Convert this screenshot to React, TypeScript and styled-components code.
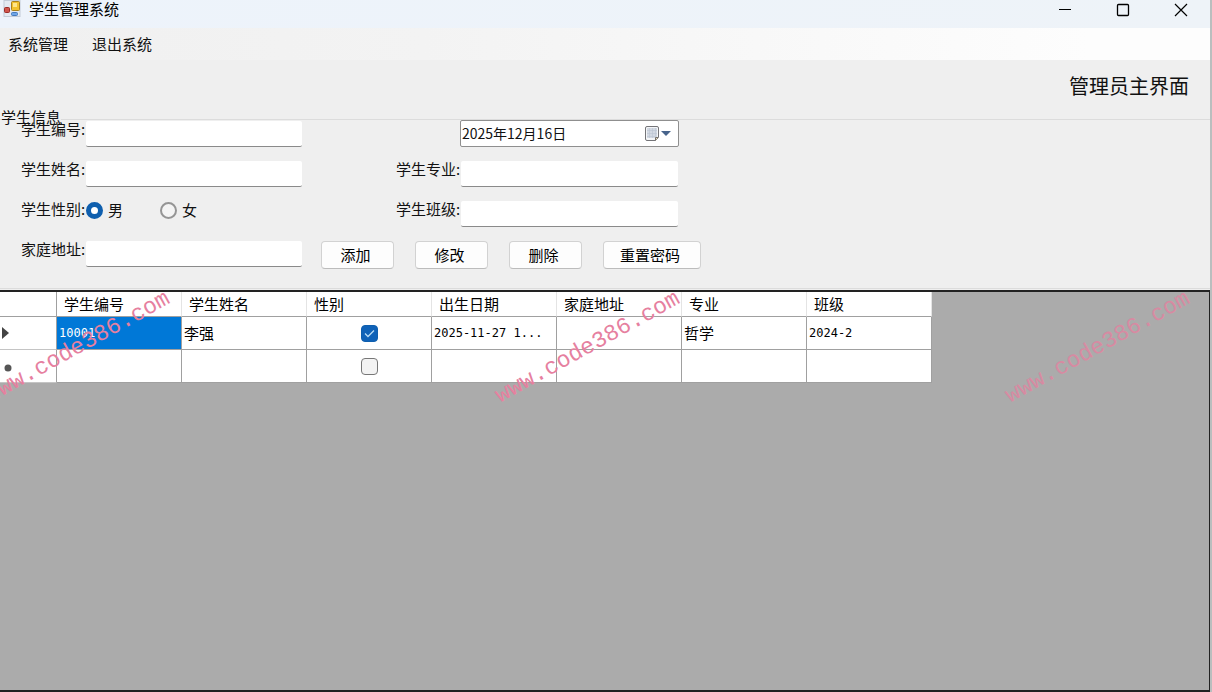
import React from "react";
import styled, { createGlobalStyle } from "styled-components";

const GlobalStyle = createGlobalStyle`
  * { box-sizing: border-box; }
  body {
    margin: 0;
    background: #efefef;
    color: #111;
    font-family: "Noto Sans CJK SC", sans-serif;
    font-size: 15px;
    line-height: 20px;
  }
  button, input { font: inherit; color: inherit; }
`;

const Window = styled.div`
  position: relative;
  display: flex;
  flex-direction: column;
  min-height: 100vh;
  overflow: hidden;
  border-right: 2px solid #b9bebe;
`;

const TitleBar = styled.header`
  display: flex;
  align-items: flex-start;
  justify-content: space-between;
  height: 28px;
  padding: 0 12px 0 3px;
  background: linear-gradient(90deg, #edf3fb, #eef3f8);
`;

const AppTitle = styled.h1`
  display: flex;
  align-items: center;
  gap: 8px;
  margin: 0;
  color: #000;
  font-size: 15px;
  font-weight: 400;
  line-height: 16px;
`;

const WindowControls = styled.div`
  display: flex;
  gap: 24px;
`;

const WindowButton = styled.button`
  display: grid;
  place-items: center;
  width: 34px;
  height: 20px;
  padding: 0;
  border: 0;
  background: transparent;
`;

const MenuBar = styled.nav`
  display: flex;
  align-items: center;
  gap: 24px;
  height: 32px;
  padding: 0 8px;
  background: linear-gradient(90deg, #f0f0f0, #f3f3f3 35%, #fdfdfd 90%);
`;

const MenuItem = styled.button`
  padding: 0;
  border: 0;
  background: transparent;
`;

const Banner = styled.div`
  display: flex;
  justify-content: flex-end;
  align-items: center;
  height: 56px;
  padding: 0 21px 4px;
`;

const BannerTitle = styled.h2`
  margin: 0;
  font-size: 20px;
  font-weight: 400;
`;

const StudentInfo = styled.fieldset`
  min-width: 0;
  margin: 0;
  padding: 0 0 21px 21px;
  border: 0 solid #dcdcdc;
  border-width: 1px 0;
`;

const Legend = styled.legend`
  margin-left: -20px;
  padding: 0 0 6px;
  line-height: 1px;
`;

const FormRows = styled.div`
  display: flex;
  flex-direction: column;
  gap: 14px;
  margin-top: -2px;
`;

const FormRow = styled.div`
  display: flex;
  height: 27px;
  margin-bottom: -1px;
`;

const Field = styled.div`
  display: flex;
  width: 281px;
`;

const SecondField = styled(Field)`
  width: 282px;
  margin-left: 94px;
`;

const FieldLabel = styled.label`
  flex: 0 0 65px;
  line-height: 16px;
  white-space: nowrap;
`;

const TextBox = styled.input`
  flex: 1;
  min-width: 0;
  height: 26px;
  padding: 0 3px;
  border: 0;
  border-bottom: 1px solid #8a8a8a;
  border-radius: 2px;
  background: #fff;
  outline: 0;
`;

const DateBox = styled.div`
  display: flex;
  align-items: center;
  width: 219px;
  height: 27px;
  margin: -1px 0 0 158px;
  border: 1px solid #8f8f8f;
  border-radius: 2px;
  background: #fff;
`;

const DateInput = styled.input`
  flex: 1;
  min-width: 0;
  height: 24px;
  padding: 0 1px 2px;
  border: 0;
  background: transparent;
  font-size: 14px;
  outline: 0;
`;

const DateToggle = styled.button`
  display: flex;
  align-items: center;
  padding: 0 6px 0 0;
  border: 0;
  background: transparent;
`;

const RadioGroup = styled.div`
  display: flex;
  align-items: flex-start;
  gap: 37px;
`;

const RadioLabel = styled.label`
  display: flex;
  align-items: center;
  gap: 5px;
  line-height: 18px;
`;

const Radio = styled.input`
  appearance: none;
  width: 17px;
  height: 17px;
  margin: 0;
  border: 2px solid #959595;
  border-radius: 50%;
  background: #f4f4f4;
  &:checked {
    border: 5px solid #0f5fae;
    background: #fff;
  }
`;

const ButtonRow = styled.div`
  display: flex;
  gap: 21px;
  margin-left: 19px;
`;

const ActionButton = styled.button<{ $wide?: boolean }>`
  width: ${(p) => (p.$wide ? 98 : 73)}px;
  height: 28px;
  padding: 0 4px 0 0;
  border: 1px solid #d2d2d2;
  border-bottom-color: #bcbcbc;
  border-radius: 4px;
  background: #fdfdfd;
  color: #000;
`;

const GridPanel = styled.main`
  flex: 1;
  margin-top: 1px;
  border: solid #222;
  border-width: 2px 1px 2px 0;
  background: #ababab;
`;

const Table = styled.table`
  width: 932px;
  table-layout: fixed;
  border-collapse: separate;
  border-spacing: 0;
  background: #fff;
  color: #000;
`;

const HeadCell = styled.th<{ $corner?: boolean }>`
  height: 25px;
  padding: 0 7px;
  border-right: 1px solid ${(p) => (p.$corner ? "#a0a0a0" : "#e4e4e4")};
  border-bottom: 1px solid #a0a0a0;
  font-weight: 400;
  text-align: left;
`;

const RowMarker = styled.th`
  height: 33px;
  padding: 0 0 0 2px;
  border-right: 1px solid #a0a0a0;
  border-bottom: 1px solid #c4c4c4;
  text-align: left;
`;

const Cell = styled.td<{ $selected?: boolean; $latin?: boolean }>`
  height: 33px;
  padding: 0 2px;
  border-right: 1px solid #a0a0a0;
  border-bottom: 1px solid #a0a0a0;
  background: ${(p) => (p.$selected ? "#0078d7" : "#fff")};
  color: ${(p) => (p.$selected ? "#fff" : "#000")};
  font-family: ${(p) => (p.$latin ? '"DejaVu Sans Mono", monospace' : "inherit")};
  font-size: ${(p) => (p.$latin ? 12 : 15)}px;
  white-space: nowrap;
  overflow: hidden;
`;

const CheckWrap = styled.label`
  display: grid;
  place-items: center;
`;

const CheckBox = styled.input`
  appearance: none;
  grid-area: 1 / 1;
  width: 17px;
  height: 17px;
  margin: 0;
  border: 1px solid #777;
  border-radius: 4px;
  background: #f3f3f3;
  &:checked {
    border-color: #0f5fae;
    background: #0f62b8;
  }
`;

const CheckMark = styled.svg`
  grid-area: 1 / 1;
  z-index: 1;
  pointer-events: none;
`;

const Watermark = styled.span<{ $x: number; $faint?: boolean }>`
  position: absolute;
  left: ${(p) => p.$x}px;
  top: 384px;
  color: #e6809f;
  opacity: ${(p) => (p.$faint ? 0.75 : 1)};
  font-family: "Liberation Mono", monospace;
  font-size: 23px;
  line-height: 24px;
  white-space: nowrap;
  transform: rotate(-29deg);
  transform-origin: 0 100%;
  pointer-events: none;
`;

const AppIcon = () => (
  <svg width="18" height="18" viewBox="0 0 18 18" aria-hidden="true">
    <rect x="1" y="0.500" width="16" height="16" fill="#e4eaf2" stroke="#c3ccd8" />
    <rect x="8.500" y="1.500" width="8" height="9" rx="1" fill="#f3c22e" stroke="#a9801c" />
    <rect x="10" y="3" width="4" height="4" fill="#ffe68a" />
    <rect x="1.500" y="7.500" width="5" height="5" rx="1" fill="#d0554c" stroke="#9a2c28" />
    <rect x="8.500" y="12.500" width="6" height="3" rx="1" fill="#6fa5e6" stroke="#4479bd" />
  </svg>
);

const CalendarIcon = () => (
  <svg width="28" height="18" viewBox="0 0 28 18" aria-hidden="true">
    <path d="M3 1.500h10a1.500 1.500 0 0 1 1.500 1.500v9.500l-3 3H3A1.500 1.500 0 0 1 1.500 14V3A1.500 1.500 0 0 1 3 1.500z" fill="#f4f6f8" stroke="#747478" />
    <rect x="3" y="3" width="10" height="10" fill="#d3d9e3" />
    <path d="M3 5.500h10M3 8.500h10M3 11.500h8M5.500 3v10M8.500 3v10M11.500 3v9" stroke="#bcc4d2" strokeWidth="0.600" />
    <path d="M14 12.500h-2.500v3" fill="#e8d9b8" stroke="#74706a" />
    <path d="M17 6h10l-5 5z" fill="#48648c" />
  </svg>
);

const columns = ["学生编号", "学生姓名", "性别", "出生日期", "家庭地址", "专业", "班级"];

function LabeledText({ id, label }: { id: string; label: string }) {
  return (
    <>
      <FieldLabel htmlFor={id}>{label}:</FieldLabel>
      <TextBox id={id} type="text" />
    </>
  );
}

export default function App() {
  return (
    <>
      <GlobalStyle />
      <Window>
        <TitleBar>
          <AppTitle>
            <AppIcon />
            学生管理系统
          </AppTitle>
          <WindowControls>
            <WindowButton type="button" aria-label="最小化">
              <svg width="14" height="14" viewBox="0 0 14 14"><path d="M1 6.500h12" stroke="#000" /></svg>
            </WindowButton>
            <WindowButton type="button" aria-label="最大化">
              <svg width="14" height="14" viewBox="0 0 14 14"><rect x="1.500" y="1.500" width="11" height="11" rx="1" fill="none" stroke="#000" strokeWidth="1.300" /></svg>
            </WindowButton>
            <WindowButton type="button" aria-label="关闭">
              <svg width="14" height="14" viewBox="0 0 14 14"><path d="M1 1l12 12M13 1L1 13" stroke="#000" strokeWidth="1.200" /></svg>
            </WindowButton>
          </WindowControls>
        </TitleBar>
        <MenuBar>
          <MenuItem type="button">系统管理</MenuItem>
          <MenuItem type="button">退出系统</MenuItem>
        </MenuBar>
        <Banner>
          <BannerTitle>管理员主界面</BannerTitle>
        </Banner>
        <StudentInfo>
          <Legend>学生信息</Legend>
          <FormRows>
            <FormRow>
              <Field><LabeledText id="number" label="学生编号" /></Field>
              <DateBox>
                <DateInput type="text" aria-label="出生日期" defaultValue="2025年12月16日" />
                <DateToggle type="button" aria-label="选择日期"><CalendarIcon /></DateToggle>
              </DateBox>
            </FormRow>
            <FormRow>
              <Field><LabeledText id="name" label="学生姓名" /></Field>
              <SecondField><LabeledText id="major" label="学生专业" /></SecondField>
            </FormRow>
            <FormRow>
              <Field>
                <FieldLabel as="span">学生性别:</FieldLabel>
                <RadioGroup role="radiogroup" aria-label="学生性别">
                  <RadioLabel><Radio type="radio" name="gender" defaultChecked />男</RadioLabel>
                  <RadioLabel><Radio type="radio" name="gender" />女</RadioLabel>
                </RadioGroup>
              </Field>
              <SecondField><LabeledText id="class" label="学生班级" /></SecondField>
            </FormRow>
            <FormRow>
              <Field><LabeledText id="address" label="家庭地址" /></Field>
              <ButtonRow>
                <ActionButton type="button">添加</ActionButton>
                <ActionButton type="button">修改</ActionButton>
                <ActionButton type="button">删除</ActionButton>
                <ActionButton type="button" $wide>重置密码</ActionButton>
              </ButtonRow>
            </FormRow>
          </FormRows>
        </StudentInfo>
        <GridPanel>
          <Table>
            <colgroup>
              <col width="57" />
              {columns.map((c) => <col key={c} />)}
            </colgroup>
            <thead>
              <tr>
                <HeadCell $corner aria-label="行" />
                {columns.map((c) => <HeadCell key={c} scope="col">{c}</HeadCell>)}
              </tr>
            </thead>
            <tbody>
              <tr>
                <RowMarker scope="row" aria-label="当前行">
                  <svg width="8" height="12" viewBox="0 0 8 12"><path d="M0 0l7 6-7 6z" fill="#444" /></svg>
                </RowMarker>
                <Cell $selected $latin>10001</Cell>
                <Cell>李强</Cell>
                <Cell>
                  <CheckWrap>
                    <CheckBox type="checkbox" aria-label="李强 性别" defaultChecked />
                    <CheckMark width="11" height="9" viewBox="0 0 11 9"><path d="M1 4.500l3 3L10 1.500" fill="none" stroke="#b9dcf5" strokeWidth="1.300" /></CheckMark>
                  </CheckWrap>
                </Cell>
                <Cell $latin>2025-11-27 1...</Cell>
                <Cell />
                <Cell>哲学</Cell>
                <Cell $latin>2024-2</Cell>
              </tr>
              <tr>
                <RowMarker scope="row" aria-label="新行">
                  <svg width="12" height="12" viewBox="0 0 12 12"><circle cx="6" cy="8" r="3.500" fill="#555" /></svg>
                </RowMarker>
                <Cell />
                <Cell />
                <Cell>
                  <CheckWrap><CheckBox type="checkbox" aria-label="新行 性别" /></CheckWrap>
                </Cell>
                <Cell />
                <Cell />
                <Cell />
                <Cell />
              </tr>
            </tbody>
          </Table>
        </GridPanel>
        <Watermark $x={-7} aria-hidden="true">www.code386.com</Watermark>
        <Watermark $x={503} aria-hidden="true">www.code386.com</Watermark>
        <Watermark $x={1013} $faint aria-hidden="true">www.code386.com</Watermark>
      </Window>
    </>
  );
}
